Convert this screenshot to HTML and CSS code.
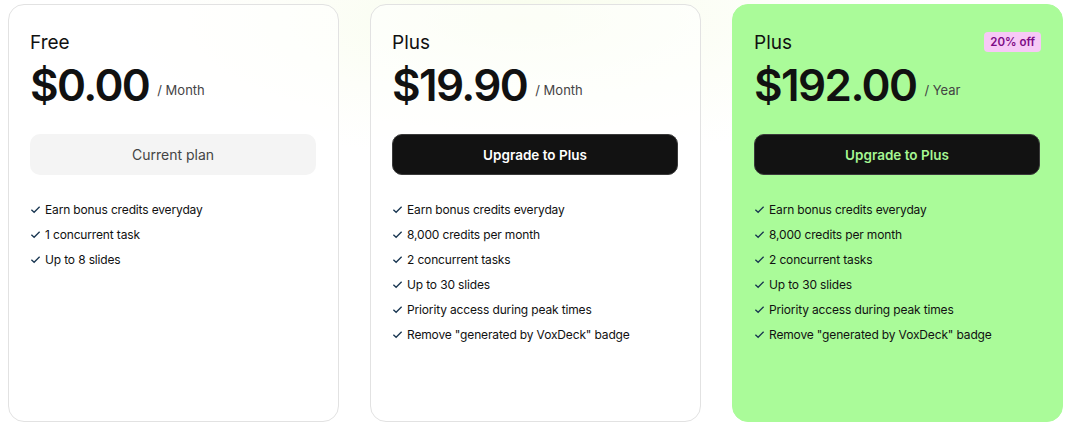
FILE: index.html
```html
<!DOCTYPE html>
<html lang="en">
<head>
  <meta charset="UTF-8" />
  <meta name="viewport" content="width=device-width, initial-scale=1.0"/>
  <title>Pricing</title>
  <link rel="stylesheet" href="styles.css">
</head>
<body>
  <div class="plans">

    <div class="plan">
      <div class="plan-head">
        <h3>Free</h3>
      </div>
      <div class="price">
        <span class="amount">$0.00</span>
        <span class="period">/ Month</span>
      </div>
      <button class="btn btn-current">Current plan</button>
      <ul class="features">
        <li><svg class="check" viewBox="0 0 12 12"><path d="M1.5 6.2 L4.5 9 L10.5 3"/></svg>Earn bonus credits everyday</li>
        <li><svg class="check" viewBox="0 0 12 12"><path d="M1.5 6.2 L4.5 9 L10.5 3"/></svg>1 concurrent task</li>
        <li><svg class="check" viewBox="0 0 12 12"><path d="M1.5 6.2 L4.5 9 L10.5 3"/></svg>Up to 8 slides</li>
      </ul>
    </div>

    <div class="plan">
      <div class="plan-head">
        <h3>Plus</h3>
      </div>
      <div class="price">
        <span class="amount">$19.90</span>
        <span class="period">/ Month</span>
      </div>
      <button class="btn btn-upgrade">Upgrade to Plus</button>
      <ul class="features">
        <li><svg class="check" viewBox="0 0 12 12"><path d="M1.5 6.2 L4.5 9 L10.5 3"/></svg>Earn bonus credits everyday</li>
        <li><svg class="check" viewBox="0 0 12 12"><path d="M1.5 6.2 L4.5 9 L10.5 3"/></svg>8,000 credits per month</li>
        <li><svg class="check" viewBox="0 0 12 12"><path d="M1.5 6.2 L4.5 9 L10.5 3"/></svg>2 concurrent tasks</li>
        <li><svg class="check" viewBox="0 0 12 12"><path d="M1.5 6.2 L4.5 9 L10.5 3"/></svg>Up to 30 slides</li>
        <li><svg class="check" viewBox="0 0 12 12"><path d="M1.5 6.2 L4.5 9 L10.5 3"/></svg>Priority access during peak times</li>
        <li><svg class="check" viewBox="0 0 12 12"><path d="M1.5 6.2 L4.5 9 L10.5 3"/></svg>Remove "generated by VoxDeck" badge</li>
      </ul>
    </div>

    <div class="plan plan-yearly">
      <div class="plan-head">
        <h3>Plus</h3>
        <span class="discount">20% off</span>
      </div>
      <div class="price">
        <span class="amount">$192.00</span>
        <span class="period">/ Year</span>
      </div>
      <button class="btn btn-upgrade">Upgrade to Plus</button>
      <ul class="features">
        <li><svg class="check" viewBox="0 0 12 12"><path d="M1.5 6.2 L4.5 9 L10.5 3"/></svg>Earn bonus credits everyday</li>
        <li><svg class="check" viewBox="0 0 12 12"><path d="M1.5 6.2 L4.5 9 L10.5 3"/></svg>8,000 credits per month</li>
        <li><svg class="check" viewBox="0 0 12 12"><path d="M1.5 6.2 L4.5 9 L10.5 3"/></svg>2 concurrent tasks</li>
        <li><svg class="check" viewBox="0 0 12 12"><path d="M1.5 6.2 L4.5 9 L10.5 3"/></svg>Up to 30 slides</li>
        <li><svg class="check" viewBox="0 0 12 12"><path d="M1.5 6.2 L4.5 9 L10.5 3"/></svg>Priority access during peak times</li>
        <li><svg class="check" viewBox="0 0 12 12"><path d="M1.5 6.2 L4.5 9 L10.5 3"/></svg>Remove "generated by VoxDeck" badge</li>
      </ul>
    </div>

  </div>
</body>
</html>
```

FILE: styles.css
```css
body {
  font-family: "Inter", "Open Sans", sans-serif;
  margin: 0;
  padding: 4px 6px 5px 8px;
  background: radial-gradient(ellipse 420px 140px at 520px 20px, #f8fdec 0%, #fdfef9 60%, #ffffff 100%);
  color: #111;
}
.plans {
  display: grid;
  grid-template-columns: repeat(3, 331px);
  gap: 31px;
}
.plan {
  height: 418px;
  box-sizing: border-box;
  border: 1px solid #e2e2e2;
  border-radius: 16px;
  padding: 26px 22px 0 21px;
  background: rgba(255, 255, 255, 0.55);
}
.plan-yearly {
  background: #aafb99;
  border-color: #aafb99;
}
.plan-head {
  display: flex;
  justify-content: space-between;
  align-items: flex-start;
  height: 24px;
}
.plan-head h3 {
  margin: 0;
  font-size: 19px;
  font-weight: 400;
  line-height: 24px;
  color: #111;
}
.discount {
  margin-top: 1px;
  margin-right: -1px;
  background: #f7c9f6;
  color: #7e0c86;
  font-size: 11.5px;
  font-weight: 600;
  padding: 3px 6px;
  border-radius: 4px;
  line-height: 14px;
}
.price {
  display: flex;
  align-items: flex-end;
  margin-top: 3px;
  height: 54px;
}
.amount {
  font-size: 44px;
  font-weight: 600;
  letter-spacing: -1.6px;
  line-height: 54px;
}
.period {
  margin-left: 8px;
  padding-bottom: 14px;
  font-size: 13px;
  line-height: 16px;
  color: #444;
}
.btn {
  display: block;
  width: 100%;
  height: 41px;
  margin-top: 22px;
  border-radius: 10px;
  font-family: inherit;
  font-size: 14px;
  cursor: pointer;
}
.btn-current {
  background: #f4f4f4;
  border: none;
  color: #444;
}
.btn-upgrade {
  background: #121212;
  border: 1px solid #3a3a3a;
  color: #fff;
  font-size: 13.5px;
  font-weight: 600;
}
.plan-yearly .btn-upgrade {
  color: #a6f692;
}
.features {
  list-style: none;
  margin: 22px 0 0;
  padding: 0;
}
.features li {
  display: flex;
  align-items: center;
  height: 25px;
  font-size: 12px;
  letter-spacing: -0.15px;
  color: #111;
}
.check {
  width: 11px;
  height: 11px;
  margin-right: 4px;
  fill: none;
  stroke: #173550;
  stroke-width: 1.4;
}
```
